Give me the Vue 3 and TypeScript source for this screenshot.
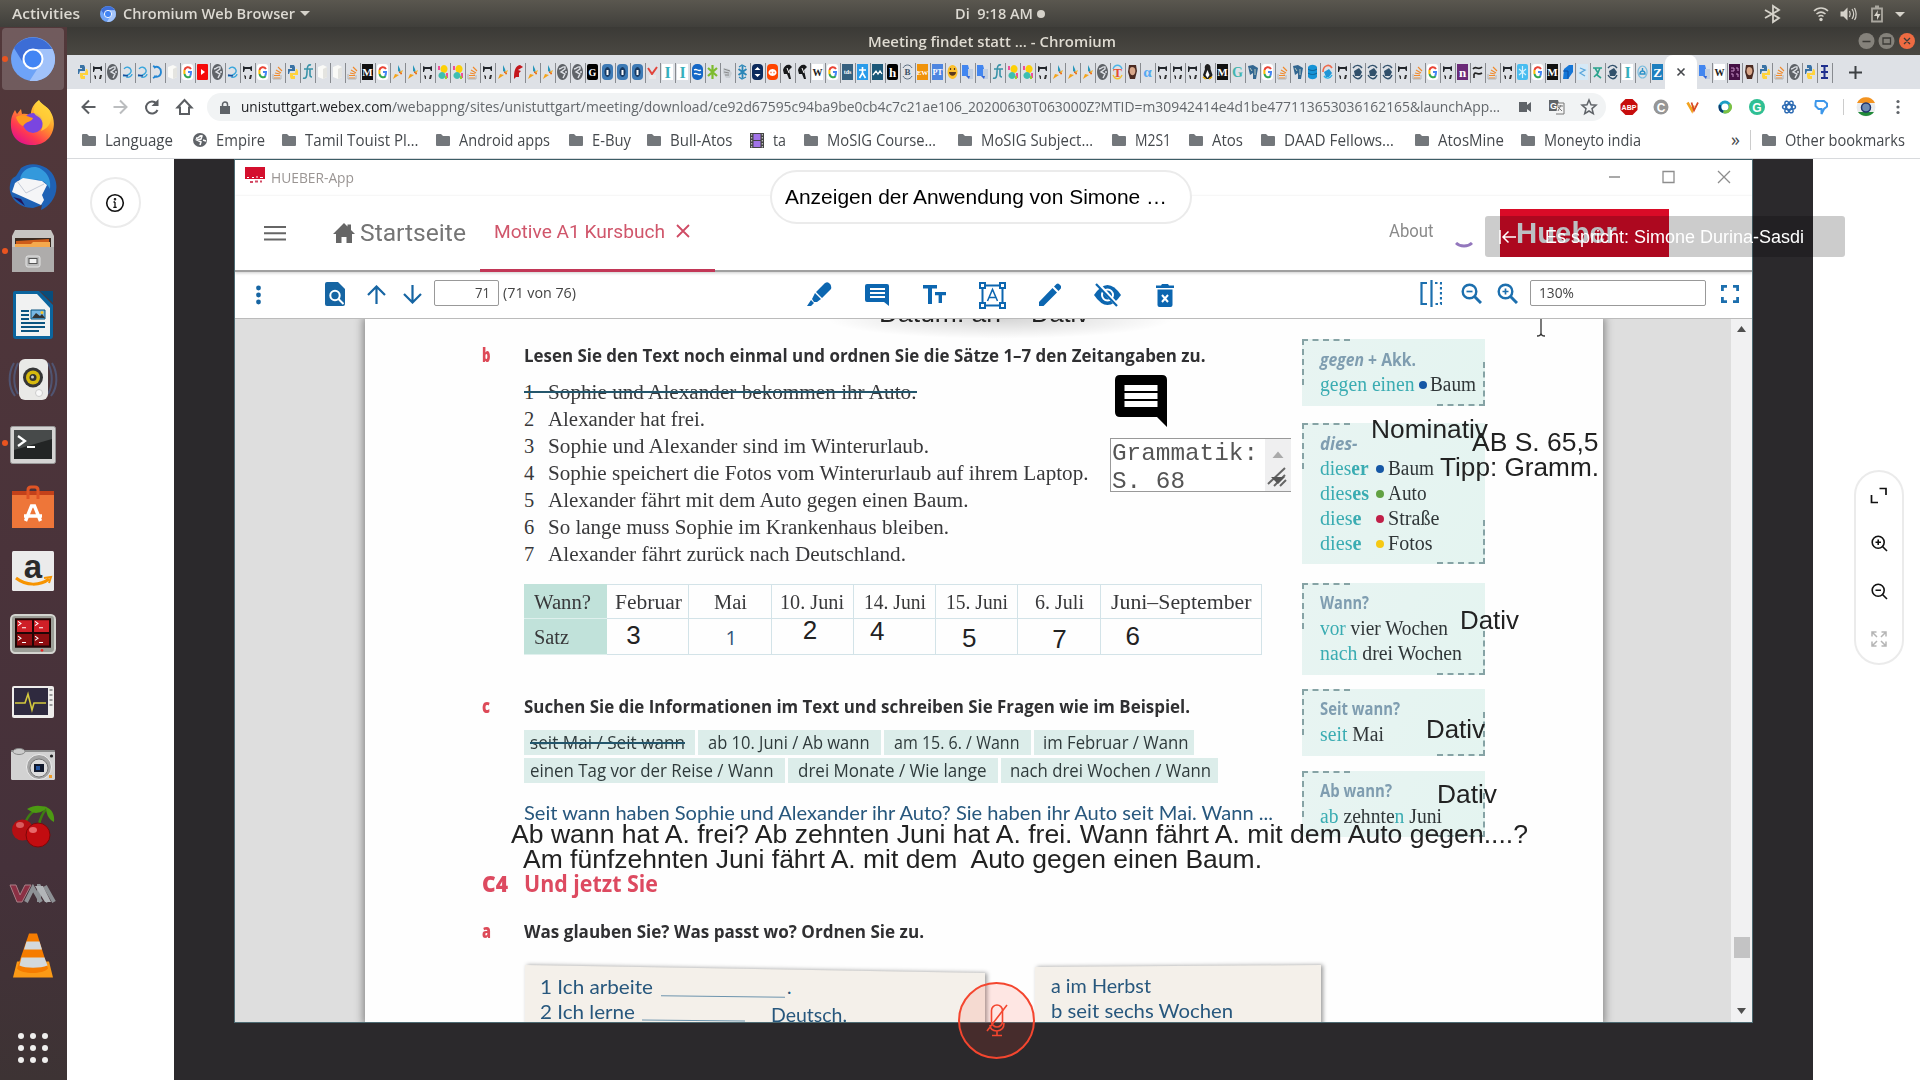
<script setup lang="ts">
type Shape = { d: string; f?: string; s?: string; w?: number }
type Fav = { bg?: string; r?: number; p?: Shape[]; t?: string; c?: string; z?: number }

// Stretches or condenses a run of text to the given advance width.
const fit = (el: HTMLElement, w: number) => {
  el.style.transform = 'none'
  el.style.marginRight = '0'
  const n = el.getBoundingClientRect().width
  if (!n) return
  el.style.transform = `scaleX(${w / n})`
  el.style.marginRight = `${w - n}px`
}
const vFit = {
  mounted: (el: HTMLElement, b: { value: number }) => fit(el, b.value),
}

const favs: Record<string, Fav> = {
  py: { p: [{ d: 'M3 1h4l1 2v4H3L2 10H1V5h4V4H3z', f: '#3a73a5' }, { d: 'M8 15H4l-1-2V9h5l1-4h1l1 2v4H6v1h2z', f: '#ffd33c' }] },
  gh: { p: [{ d: 'M1 2l2 1h5l2-1v5H9L8 5H3L2 8H1z', f: '#22262b' }, { d: 'M2 11l2 1v3H3zM8 11h2l-1 4H7z', f: '#333' }] },
  gl: { p: [{ d: 'M5.500 0a5.500 8 0 1 0 .01 0z', f: '#5f6368' }, { d: 'M2 5c3 0 3-3 6-2v2L4 8l4 2-2 4M8 8h2', s: '#dee1e6', w: 1.4 }] },
  c: { p: [{ d: 'M2 5c2-3 6-2 7 1s-3 6-8 6M4 13c3 1 6-1 6-3', s: '#36a5dc', w: 1.3 }, { d: 'M1 11l5 1', s: '#1a4f9c', w: 1.3 }] },
  c2: { p: [{ d: 'M2 4c3-3 7 0 7 4s-4 6-7 4M1 2l3 1M1 14l4-2', s: '#2186d4', w: 1.8 }] },
  bx: { p: [{ d: 'M1 3l5-2 4 2v10l-4 2-5-2z', f: '#fafaf7' }, { d: 'M6 5v10l4-2V3z', f: '#e4e4e0' }] },
  g: { bg: '#fff', r: 3, p: [{ d: 'M9 5C7 2 3 3 2.500 6', s: '#ea4335', w: 2 }, { d: 'M2.400 6v4', s: '#fbbc05', w: 2 }, { d: 'M2.500 10c1 4 5 4 6 2', s: '#34a853', w: 2 }, { d: 'M6 8h3c0 2 0 3-1 4', s: '#4285f4', w: 2 }] },
  yt: { bg: '#f60a0a', r: 1, p: [{ d: 'M4 5l4 3-4 3z', f: '#fff' }] },
  so: { p: [{ d: 'M2 14h6M2 11.500h6M3 9l5 1M4 6l5 3M6 3l4 4', s: '#f08a2b', w: 1.1 }, { d: 'M1 10v5h8v-4', s: '#a9a9a9', w: .8 }] },
  ft: { p: [{ d: 'M9 1C6 0 5 3 5 8s-1 7-4 6M2 5h9M8 5v6c0 2 1 2 2 2', s: '#3a93a8', w: 1.6 }] },
  m: { bg: '#111', t: 'M', c: '#fff', z: 11 },
  bd: { p: [{ d: 'M6 1l2 4 1 4-3-2z', f: '#2796ba' }, { d: 'M7 8l4-2-2 5z', f: '#f2b233' }, { d: 'M1 15l2-5 4 1z', f: '#f5a31a' }, { d: 'M7 8l3 2', s: '#e34c26', w: 1 }] },
  el: { p: [{ d: 'M7 1a3.500 4 0 1 0 .01 0z', f: '#fdd006' }, { d: 'M5 8a3.500 3.500 0 1 0 .01 0z', f: '#3ebeb0' }, { d: 'M1 2h2v4H1zM9 9h2v5H9z', f: '#f04e98' }, { d: 'M8 12h2v3H8z', f: '#9c3' }] },
  rd: { p: [{ d: 'M2 15c0-8 1-13 6-14l3 2-5 3 3 1-2 2v4H4z', f: '#c4161c' }] },
  gb: { bg: '#000', r: 2, t: 'G', c: '#fff', z: 10 },
  dk: { bg: '#3d7ab5', r: 4, p: [{ d: 'M5.500 3a3 5 0 1 0 .01 0z', f: '#173a63' }, { d: 'M5.500 6v5', s: '#fff', w: 2 }] },
  ck: { p: [{ d: 'M1 4l4 6 5-7', s: '#e2453c', w: 2 }, { d: 'M2 11h7v4H2z', f: '#e9e9ea' }] },
  i: { bg: '#fff', t: 'I', c: '#35b0bd', z: 16 },
  bc: { bg: '#1467c6', r: 5, p: [{ d: 'M2 6c3-2 4 2 7 0M2 10c3-2 4 2 7 0', s: '#fff', w: 1.3 }] },
  gf: { p: [{ d: 'M5.500 1v14M1 4l9 8M10 4l-9 8', s: '#7dbb2e', w: 2.2 }] },
  hd: { p: [{ d: 'M1 4l6 1 3 4-2 5H4L1 9z', f: '#c9ced3' }, { d: 'M2 5l6 2M2 8l5 1M3 11l4 0', s: '#777', w: .8 }] },
  bf: { p: [{ d: 'M5.500 2v12M1.500 5l8 6M9.500 5l-8 6', s: '#2a86b8', w: 1.8 }, { d: 'M2 3l3-2 4 2M2 13l3 2 4-2', s: '#2a86b8', w: 1.2 }] },
  nv: { bg: '#0b2a5c', r: 4, p: [{ d: 'M5.500 3l3 3H2.500zM5.500 13l3-3H2.500z', f: '#fff' }] },
  re: { bg: '#ff4500', r: 4, p: [{ d: 'M5.500 5a4 3.500 0 1 0 .01 0z', f: '#fff' }, { d: 'M3.500 8.500h1M6.500 8.500h1', s: '#ff4500', w: 1.5 }] },
  bb: { p: [{ d: 'M1 6c1-4 4-6 7-5l2 2-3 3 2 9H7L5 10H2z', f: '#17191b' }, { d: 'M5 4l2 5', s: '#fff', w: 1 }] },
  w: { bg: '#fff', t: 'W', c: '#222', z: 10 },
  td: { bg: '#35607f', t: 'tds', c: '#fff', z: 6 },
  pe: { bg: '#2a9cea', p: [{ d: 'M5.500 3v6l-3 5M5.500 9l3 5M2 6h7', s: '#fff', w: 1.6 }] },
  mt: { bg: '#1b5778', p: [{ d: 'M1 11l3-4 2 3 2-3 2 3', s: '#fff', w: 1.3 }] },
  h: { bg: '#000', r: 2, t: 'h', c: '#fff', z: 13 },
  b: { t: 'B', c: '#3d5166', z: 9, p: [{ d: 'M1 4c2-4 7-4 9 0M1 12c2 4 7 4 9 0', s: '#5b6d80', w: 1 }] },
  ew: { bg: '#f0930a', t: 'EW', c: '#fff', z: 7 },
  pt: { bg: '#4e86e0', t: 'PT', c: '#fff', z: 8 },
  em: { p: [{ d: 'M5.500 1a5 7 0 1 0 .01 0z', f: '#fbc02d' }, { d: 'M2 8h7c0 5-7 5-7 0z', f: '#5b3a1e' }, { d: 'M3.500 4v2M7.500 4v2', s: '#5b3a1e', w: 1.2 }] },
  tr: { p: [{ d: 'M0 1h6l3 11H0z', f: '#4286f0' }, { d: 'M6 5h5v10H6z', f: '#c3cfe0' }, { d: 'M4 12h4l-1 3z', f: '#3367d6' }] },
  tt: { t: 'T', c: '#e54b32', z: 13, p: [{ d: 'M1 5c2-5 7-5 9 0', s: '#4bb6e8', w: 1.4 }, { d: 'M1 11c2 5 7 5 9 0', s: '#f2c02e', w: 1.4 }] },
  fc: { p: [{ d: 'M2 1h7l1 6-2 8H3L1 8z', f: '#4b2b22' }, { d: 'M5 3c3 0 4 3 3 6s-4 3-5 0 0-6 2-6z', f: '#d8a78a' }] },
  al: { t: 'α', c: '#55a9f2', z: 15 },
  lx: { p: [{ d: 'M5.500 0a3 4 0 0 1 3 5l2 6-2 4H3l-2-4 2-6c-1-3 1-5 2.500-5z', f: '#1e1e1e' }, { d: 'M5.500 6l2 5-2 3-2-3z', f: '#fff' }, { d: 'M1 13l3 2M10 13l-3 2', s: '#f4b400', w: 1.5 }] },
  gt: { t: 'G', c: '#44b5ae', z: 14 },
  pg: { p: [{ d: 'M1 2l5-1 5 3-2 11H6V9L3 11z', f: '#336791' }, { d: 'M3 4l2 3M8 5v6', s: '#b8c9c0', w: 1 }] },
  db: { p: [{ d: 'M1 3c2-3 7-3 9 0v10c-2 3-7 3-9 0z', f: '#1693d6' }, { d: 'M1 5c3 2 6 2 9 0M1 9c3 2 6 2 9 0', s: '#0d5f93', w: 1 }] },
  rc: { p: [{ d: 'M10 4C7-1 1 2 1 8', s: '#ef6a4c', w: 1.6 }, { d: 'M2 8l5-3 3 4-3 4H4z', f: '#2196d6' }, { d: 'M2 12c2 3 6 3 8-1', s: '#25b0e8', w: 1.4 }] },
  wh: { p: [{ d: 'M2 7l5-3 3 4-2 4H3z', f: '#31506b' }, { d: 'M1 4c3-4 7-3 9 0M1 11c3 5 7 5 9 0', s: '#31506b', w: 1.4 }] },
  pn: { bg: '#6b2a78', t: 'n', c: '#fff', z: 13 },
  ti: { p: [{ d: 'M1 5c3-4 5 2 9-2M2 10c2-3 4 2 8-1M2 10v4', s: '#222', w: 1.6 }] },
  lf: { bg: '#49bdf0', r: 2, p: [{ d: 'M5.500 2v12M2 5l7 6M9 5l-7 6', s: '#d7f1fd', w: 1.2 }] },
  bs: { p: [{ d: 'M2 5l5-4h4v7l-5 7H1z', f: '#1577d8' }, { d: 'M1 7h5v8', s: '#0c4fa4', w: 1 }] },
  ld: { bg: '#d6e9f6', p: [{ d: 'M3 4l5 2-5 3 5 3', s: '#5aa7dc', w: 1.3 }] },
  gn: { p: [{ d: 'M1 4h9M3 4l3 5-4 4M8 4l-3 7 4 3', s: '#2aa38d', w: 1.6 }] },
  lb: { p: [{ d: 'M5.500 2a4.500 6 0 1 0 .01 0z', s: '#7dbdde', w: 1.2 }, { d: 'M3 10c0-4 5-4 5 0zM5.500 4v3', s: '#2d93c9', w: 1.4 }] },
  z: { bg: '#1d7fbf', t: 'Z', c: '#fff', z: 13 },
  pu: { bg: '#451045', p: [{ d: 'M2 4h3v3H2M7 4h2v3M2 10h2v3M7 10h2v3', s: '#c792c7', w: 1 }] },
  hh: { p: [{ d: 'M2 2h7M2 14h7M5.500 2v12M2 8h7', s: '#20308e', w: 2 }] },
}
const tabsBefore = ('py gh gl c c c2 bx g yt gl c gh g so py ft bx bx so m g bd bd gh el el so gh bd rd bd bd gl gl gb dk dk dk ' +
  'ck i i bc gf hd bf nv re bb bb w g td pe mt h b ew pt em tr tr ft el el gh bd bd bd gl tt fc al gh gh gh lx m gt pg g ' +
  'so pg db rc gh wh wh wh gh so g gh pn ti so gh lf g m bs ld gn wh i lb z').split(' ')
const tabsAfter = 'tr w pu fc py so gl py hh'.split(' ')

const bookmarks = [
  { k: 'f', t: 'Language', w: 68, p: 111 }, { k: 'g', t: 'Empire', w: 49, p: 89 },
  { k: 'f', t: 'Tamil Touist Pl…', w: 113.5, p: 154 }, { k: 'f', t: 'Android apps', w: 91, p: 132.5 },
  { k: 'f', t: 'E-Buy', w: 39, p: 78.500 }, { k: 'f', t: 'Bull-Atos', w: 62.5, p: 102.500 },
  { k: 'v', t: 'ta', w: 13, p: 54.500 }, { k: 'f', t: 'MoSIG Course…', w: 109, p: 154 },
  { k: 'f', t: 'MoSIG Subject…', w: 112, p: 154 }, { k: 'f', t: 'M2S1', w: 36, p: 77 },
  { k: 'f', t: 'Atos', w: 31, p: 72 }, { k: 'f', t: 'DAAD Fellows…', w: 110, p: 154 },
  { k: 'f', t: 'AtosMine', w: 66, p: 106 }, { k: 'f', t: 'Moneyto india', w: 97, p: 120 },
]

const sentences = [
  { t: 'Sophie und Alexander bekommen ihr Auto.', w: 368.5 },
  { t: 'Alexander hat frei.', w: 157 },
  { t: 'Sophie und Alexander sind im Winterurlaub.', w: 381 },
  { t: 'Sophie speichert die Fotos vom Winterurlaub auf ihrem Laptop.', w: 540.5 },
  { t: 'Alexander fährt mit dem Auto gegen einen Baum.', w: 420.5 },
  { t: 'So lange muss Sophie im Krankenhaus bleiben.', w: 401 },
  { t: 'Alexander fährt zurück nach Deutschland.', w: 358 },
]
const months = [
  { t: 'Februar', w: 67, a: '3', c: 'n3' }, { t: 'Mai', w: 33, a: '1', c: 'n1' },
  { t: '10. Juni', w: 64, a: '2', c: 'n2' }, { t: '14. Juni', w: 62, a: '4', c: 'n4' },
  { t: '15. Juni', w: 62, a: '5', c: 'n5' }, { t: '6. Juli', w: 49, a: '7', c: 'n7' },
  { t: 'Juni–September', w: 140.5, a: '6', c: 'n6' },
]
const chips = [
  [{ t: 'seit Mai / Seit wann', w: 155, b: 171, l: 6, x: true }, { t: 'ab 10. Juni / Ab wann', w: 161.5, b: 183, l: 10 }, { t: 'am 15. 6. / Wann', w: 125.5, b: 146.5, l: 9.5 }, { t: 'im Februar / Wann', w: 145.5, b: 160.5, l: 9.5 }],
  [{ t: 'einen Tag vor der Reise / Wann', w: 243.5, b: 261, l: 6 }, { t: 'drei Monate / Wie lange', w: 188.5, b: 209.5, l: 10 }, { t: 'nach drei Wochen / Wann', w: 201, b: 217, l: 9.5 }],
]
const nouns = [
  { e: 'er', w: 48.5, c: '#1557a5', n: 'Baum', nw: 46 }, { e: 'es', w: 49, c: '#62a143', n: 'Auto', nw: 38.5 },
  { e: 'e', w: 41.5, c: '#c01f48', n: 'Straße', nw: 51.5 }, { e: 'e', w: 41.5, c: '#f6c913', n: 'Fotos', nw: 44.5 },
]
// Free-text notes laid over the document page.
const notes = [
  { t: 'Nominativ', x: 1371, y: 438, w: 117 }, { t: 'AB S. 65,5', x: 1472, y: 451, w: 126.5 },
  { t: 'Tipp: Gramm.', x: 1440, y: 476, w: 159 }, { t: 'Dativ', x: 1460, y: 629, w: 59 },
  { t: 'Dativ', x: 1426, y: 737.5, w: 59 }, { t: 'Dativ', x: 1437, y: 803, w: 60 },
  { t: 'Ab wann hat A. frei? Ab zehnten Juni hat A. frei. Wann fährt A. mit dem Auto gegen....?', x: 510.500, y: 843, w: 1017 },
  { t: 'Am fünfzehnten Juni fährt A. mit dem  Auto gegen einen Baum.', x: 522.500, y: 867.500, w: 739 },
  { t: 'Datum: an', x: 879, y: 322, w: 122 }, { t: 'Dativ', x: 1031, y: 322, w: 58 },
]
const noteStyle = (n: { x: number; y: number }) => ({ left: `${n.x - 235}px`, top: `${n.y - 319 - 24}px` })
</script>

<template>
  <div class="desktop">
    <header class="panel">
      <span class="pt act" v-fit="68">Activities</span>
      <svg class="pchr" width="16" height="16" viewBox="0 0 44 44"><circle cx="22" cy="22" r="22" fill="#6ea3f7" /><path d="M3 11A22 22 0 0 1 41 12L22 13 12 24z" fill="#3f6fd8" /><path d="M22 12h19a22 22 0 0 1-22 32l10-17z" fill="#a5c5fb" /><circle cx="22" cy="22" r="10" fill="#4285f4" stroke="#fff" stroke-width="2.500" /></svg>
      <span class="pt" v-fit="172">Chromium Web Browser</span>
      <svg class="parr" width="10" height="5"><path d="M0 0h10l-5 5z" fill="#d5d2ca" /></svg>
      <span class="pt clock" v-fit="78">Di&nbsp; 9:18 AM</span><i class="pdot"></i>
      <svg class="status" width="150" height="26" viewBox="1758 0 150 26" fill="none" stroke="#d5d2ca">
        <path d="M1764 9l14 8-6 4V5l6 4-14 8" stroke-width="1.800" transform="translate(1,0)" />
        <path d="M1814 10c4-4 10-4 14 0M1816.500 13c3-2.500 6-2.500 9 0" stroke-width="1.600" /><path d="M1818.500 15.500c2-1.500 3-1.500 5 0" stroke-width="1.400" /><circle cx="1821" cy="18.500" r="1.700" fill="#d5d2ca" stroke="none" />
        <path d="M1840.500 10.500h3l4-4v13l-4-4h-3z" fill="#d5d2ca" stroke="none" /><path d="M1849.500 10c1 2 1 4 0 6M1852 8c2 3 2 7 0 10M1854.500 7c2 4 2 9 0 12" stroke-width="1.200" />
        <path d="M1872 7.500h10v13h-10zM1875 5.500h4" stroke="#aaa79f" stroke-width="1.800" /><path d="M1878 9l-4 6h3v4l3.500-6h-3z" fill="#d5d2ca" stroke="none" />
        <path d="M1895 11h10l-5 5z" fill="#d5d2ca" stroke="none" />
      </svg>
    </header>

    <div class="below">
      <nav class="dock">
        <div class="di active run"><svg width="44" height="44" viewBox="0 0 44 44"><circle cx="22" cy="22" r="22" fill="#6ea3f7" /><path d="M3 11A22 22 0 0 1 41 12L22 12 11 24z" fill="#3c6dd6" /><path d="M22 12h19.500a22 22 0 0 1-23 32l11-17z" fill="#a1c2fa" /><circle cx="22" cy="22" r="9.500" fill="#4285f4" stroke="#fff" stroke-width="2" /></svg></div>
        <div class="di"><svg width="48" height="48" viewBox="0 0 48 48"><defs><linearGradient id="ff" x1=".9" y1=".1" x2=".3" y2="1"><stop offset="0" stop-color="#fff04a" /><stop offset=".4" stop-color="#ff9a2a" /><stop offset=".75" stop-color="#ff3a50" /><stop offset="1" stop-color="#e31587" /></linearGradient></defs><path d="M30 1c2 4 8 6 11 11 9 13 2 34-17 34C8 46 1 36 2 23c0-4 1-7 4-12l2 4 4-5 1 5c5-1 8 1 9 3-1-6 2-13 8-17z" fill="url(#ff)" /><circle cx="24" cy="24" r="10" fill="#7a45e0" /><path d="M7 18c6-4 12 0 17 1-1 4-7 3-10 8-3-1-6-5-7-9z" fill="#ff9a20" /><path d="M30 2c-7 6-6 13-2 15 6 3 7 9 4 15 9-3 12-12 9-20-3-5-9-6-11-10z" fill="#ffcf38" opacity=".8" /></svg></div>
        <div class="di"><svg width="48" height="48" viewBox="0 0 48 48"><path d="M12 5C22-3 42 2 46 16c5 14-4 27-14 31l1-5-9 3C8 45-1 33 1 22c1-7 3-7 6-9z" fill="#1f62b5" /><path d="M11 17C12 6 24 1 32 6c8 5 10 12 9 20-4-8-10-10-18-9z" fill="#3399dc" /><path d="M6 20l8-5 19 3 5 4-5 10 2 5-3 5-20-9-9-4z" fill="#f5f5f7" /><path d="M8 18l9 12 18-9" stroke="#c5cbd7" fill="none" /><path d="M4 34l12 9-4-7z" fill="#241556" /></svg></div>
        <div class="di run"><svg width="44" height="44" viewBox="0 0 44 44"><path d="M4 1h36l3 6v36H1V7z" fill="#c7c5c2" /><path d="M4 9h36v11H4z" fill="#3a2b22" /><path d="M5 12l33-2v10H5z" fill="#cd5c1a" /><path d="M4 15h16l2-2h17v6H4z" fill="#f4a94d" /><path d="M1 18h42v25H1z" fill="#aeacab" /><rect x="15" y="27" width="14" height="11" rx="2" fill="#bbb" stroke="#e4e4e4" /><rect x="18" y="29.500" width="8" height="5" fill="#f2f2f2" stroke="#555" /></svg></div>
        <div class="di"><svg width="42" height="50" viewBox="0 0 42 50"><path d="M1 3q0-2 2-2h24l14 14v31q0 3-3 3H4q-3 0-3-3z" fill="#0b659e" /><path d="M28 1h13v12z" fill="#094d7b" /><path d="M4 4h21l13 14v28H4z" fill="#f1f2f2" /><path d="M9 21h8M9 25h8M9 29h8M9 33h24M9 37h24M9 41h18" stroke="#0b5480" stroke-width="2" /><path d="M19 20h14v9H19z" fill="#77b7e4" stroke="#0b5480" /><path d="M20 28l4-5 4 3 2-2 3 4z" fill="#333" /><circle cx="30" cy="22.500" r="1.500" fill="#f4c430" /></svg></div>
        <div class="di"><svg width="50" height="48" viewBox="0 0 50 48"><path d="M6 8c-6 10-6 24 1 33M44 8c6 10 6 24-1 33M10 8c-5 10-5 22 0 31M40 8c5 10 5 22 0 31" stroke="#5470a0" opacity=".55" stroke-width="2" fill="none" /><rect x="11" y="4" width="29" height="41" rx="6" fill="#e9e9e7" /><circle cx="25" cy="22.500" r="10" fill="#353535" /><circle cx="25" cy="22.500" r="7" fill="#d6b90d" /><circle cx="25" cy="22.500" r="3.500" fill="#333" /><circle cx="24.500" cy="22" r="1.500" fill="#ccc" /><circle cx="31" cy="38" r="3.500" fill="#f8f8f8" stroke="#ccc" /></svg></div>
        <div class="di run lo"><svg width="46" height="38" viewBox="0 0 46 38"><rect x=".5" y=".5" width="45" height="37" rx="2" fill="#d5d4d3" stroke="#999" /><path d="M4 4h38v29H4z" fill="#232525" /><path d="M4 4h38v9L4 24z" fill="#474a4a" /><path d="M8 10l7 5-7 5M17 21h8" stroke="#fff" stroke-width="2.200" fill="none" /></svg></div>
        <div class="di"><svg width="42" height="44" viewBox="0 0 42 44"><path d="M0 6h42v7H0z" fill="#c3411a" /><path d="M0 10h42v33H0z" fill="#ee7639" /><path d="M16 14V5q0-3 3-3h4q3 0 3 3v9" stroke="#df5425" stroke-width="3" fill="none" /><path d="M13.500 36l6-15h3l6 15M12 31h18" stroke="#fff" stroke-width="3.400" fill="none" /></svg></div>
        <div class="di"><svg width="42" height="42" viewBox="0 0 42 42"><rect y="1" width="42" height="40" rx="1.500" fill="#ebebeb" /><text x="21" y="28" text-anchor="middle" class="amz">a</text><path d="M4 28c10 8 24 8 33 1" stroke="#f79400" stroke-width="3" fill="none" /><path d="M32 28l7-1-2 6" stroke="#f79400" stroke-width="2" fill="none" /></svg></div>
        <div class="di up1"><svg width="46" height="40" viewBox="0 0 46 38" preserveAspectRatio="none"><rect x="1" y="1" width="44" height="36" rx="4" fill="#9b9d96" stroke="#d3d4cf" stroke-width="2" /><path d="M5 4h36v28H5z" fill="#200606" /><path d="M7 6h15v11H7zM24 6h15v11H24z" fill="#cf1f27" /><path d="M7 19h15v11H7zM24 19h15v11H24z" fill="#8e0d10" /><path d="M8 7l3 2-3 2M12 13h4M25 7l3 2-3 2M29 13h4M8 21l3 2-3 2M12 27h4M25 21l3 2-3 2M29 27h4" stroke="#fff" fill="none" /><circle cx="32" cy="34.500" r="1.300" fill="#e22" /></svg></div>
        <div class="di down3"><svg width="42" height="33" viewBox="0 0 42 33"><rect width="42" height="32" rx="2" fill="#efedeb" /><path d="M2 2h34v27H2z" fill="#2f2a3f" /><path d="M3 17h10l3-9 4 16 2-7h12" stroke="#d4c93e" stroke-width="1.600" fill="none" /><path d="M37.500 4h3M37.500 9h3M37.500 14h3M37.500 19h3" stroke="#999" stroke-width="2" /></svg></div>
        <div class="di down1"><svg width="44" height="33" viewBox="0 0 44 33"><rect y="2" width="44" height="30" rx="1.500" fill="#d2d2d2" /><path d="M0 3h44" stroke="#777" stroke-width="1.500" /><ellipse cx="8" cy="3.500" rx="6" ry="3" fill="#ccc" stroke="#888" /><circle cx="28" cy="19" r="12.500" fill="#a4a4a4" stroke="#eee" /><circle cx="28" cy="20" r="9" fill="#ddd" stroke="#777" /><rect x="23" y="16" width="10" height="8" fill="#10182b" /><rect x="25" y="18" width="4" height="4" fill="#23549e" /><circle cx="40.500" cy="8" r="1.600" fill="#222" /><path d="M38 27h3v3h-3z" fill="#f09a24" /></svg></div>
        <div class="di up1"><svg width="44" height="44" viewBox="0 0 44 44"><path d="M15 17c4-9 10-12 19-13M28 21c1-7 4-12 7-16" stroke="#3e7d12" stroke-width="2.500" fill="none" /><path d="M16 5c8-5 14-3 20-2-4 6-12 7-15 5zM35 3c6 2 9 8 8 15-6-3-8-9-8-15z" fill="#4c9a12" /><circle cx="11.500" cy="26" r="10.500" fill="#b50f13" /><circle cx="27" cy="31" r="12" fill="#c20c10" stroke="#7d0709" /><ellipse cx="22" cy="26" rx="4" ry="3" fill="#e8696a" /><ellipse cx="9" cy="21" rx="4" ry="3" fill="#d95c5d" /></svg></div>
        <div class="di down3"><svg width="48" height="20" viewBox="0 0 48 20"><path d="M1 1h6l4 10 5-10h6l-9 17H8z" fill="#8b3044" stroke="#aa8088" /><path d="M17 18L24 4l8 14M30 18V2l9 16M36 2l9 16" stroke="#8d9195" stroke-width="4" fill="none" /><path d="M26 2h8l8 16h-6z" fill="#b2b5b8" /></svg></div>
        <div class="di"><svg width="42" height="47" viewBox="0 0 42 46"><path d="M5 29h32l4 16H1z" fill="#fb9a16" /><path d="M17 1h8l11 35c-5 6-26 6-31 0z" fill="#f57c00" /><path d="M14.500 9h13l2.500 8H12zM9.500 25h23l3 8c-7 3-22 3-28 0z" fill="#d3d9dc" /></svg></div>
        <div class="apps"><i v-for="n in 9" :key="n"></i></div>
      </nav>

      <main class="win">
        <div class="title"><span v-fit="248">Meeting findet statt ... - Chromium</span>
          <div class="wbtns"><svg width="60" height="18" viewBox="0 0 60 18"><circle cx="9.500" cy="9" r="8" fill="#85827b" /><circle cx="29.500" cy="9" r="8" fill="#85827b" /><circle cx="50" cy="9" r="8" fill="#ee6b42" /><path d="M5.500 9.500h8M26 6h7.500v6H26zM47 6l6 6M53 6l-6 6" stroke="#3c3b37" stroke-width="1.300" fill="none" /></svg></div>
        </div>

        <div class="tabs">
          <div class="tab" v-for="(k, i) in tabsBefore" :key="i">
            <svg width="11" height="16" viewBox="0 0 11 16"><rect v-if="favs[k].bg" width="11" height="16" :rx="favs[k].r || 0" :fill="favs[k].bg" /><path v-for="(s, j) in favs[k].p || []" :key="j" :d="s.d" :fill="s.f || 'none'" :stroke="s.s" :stroke-width="s.w" /><text v-if="favs[k].t" x="5.500" :y="8 + (favs[k].z || 10) * .36" :font-size="favs[k].z" :fill="favs[k].c" text-anchor="middle">{{ favs[k].t }}</text></svg>
          </div>
          <div class="tab-on"><svg width="10" height="10"><path d="M1.500 1.500l7 7M8.500 1.500l-7 7" stroke="#45484c" stroke-width="1.600" /></svg></div>
          <div class="tab" v-for="(k, i) in tabsAfter" :key="'a' + i">
            <svg width="11" height="16" viewBox="0 0 11 16"><rect v-if="favs[k].bg" width="11" height="16" :rx="favs[k].r || 0" :fill="favs[k].bg" /><path v-for="(s, j) in favs[k].p || []" :key="j" :d="s.d" :fill="s.f || 'none'" :stroke="s.s" :stroke-width="s.w" /><text v-if="favs[k].t" x="5.500" :y="8 + (favs[k].z || 10) * .36" :font-size="favs[k].z" :fill="favs[k].c" text-anchor="middle">{{ favs[k].t }}</text></svg>
          </div>
          <svg class="plus" width="13" height="13"><path d="M6.500 0v13M0 6.500h13" stroke="#3c4043" stroke-width="2" /></svg>
        </div>

        <div class="bar">
          <svg class="navi" width="118" height="18" viewBox="0 0 118 18" fill="none" stroke="#5b5e62" stroke-width="2"><path d="M14.500 9H2M8 2.500L1.500 9 8 15.500" /><path d="M32.500 9H45M39 2.500L45.500 9 39 15.500" stroke="#bbbdbf" /><path d="M75.500 5.500A6 6 0 1 0 76.500 12" /><path d="M77.500 1v7h-7z" fill="#5b5e62" stroke="none" /><path d="M96.500 9.500l7-7.500 7 7.500h-2.500V16h-9V9.500z" /></svg>
          <div class="url">
            <svg class="lock" width="10" height="13"><path d="M0 5h10v8H0z" fill="#5f6368" /><path d="M2.500 6V3.500a2.500 2.500 0 0 1 5 0V6" fill="none" stroke="#5f6368" stroke-width="1.500" /></svg>
            <span class="host" v-fit="151">unistuttgart.webex.com</span><span v-fit="1108">/webappng/sites/unistuttgart/meeting/download/ce92d67595c94ba9be0cb4c7c21ae106_20200630T063000Z?MTID=m30942414e4d1be477113653036162165&amp;launchApp…</span>
            <svg class="uic" width="80" height="18" viewBox="0 0 80 18"><path d="M1 4h8v3l4-3v10l-4-3v3H1z" fill="#5f6368" /><path d="M31 2h9l3 11H31z" fill="#606468" /><path d="M40 5h6v11h-8" fill="#f4f4f4" stroke="#777" /><text x="32" y="11" font-size="9" fill="#fff">G</text><path d="M40 8h5M43 7l-3 6M40 9l4 4" stroke="#777" fill="none" /><path d="M71 2l2 4.800 5 .4-4 3.400 1.300 5L71 13l-4.300 2.600 1.300-5-4-3.400 5-.4z" fill="none" stroke="#5f6368" stroke-width="1.500" /></svg>
          </div>
          <svg class="ext" width="300" height="26" viewBox="1615 94 300 26">
            <path d="M1625.500 99h7l5 5v6l-5 5h-7l-5-5v-6z" fill="#c70d0d" /><text x="1629" y="110" class="abp" text-anchor="middle">ABP</text>
            <circle cx="1661" cy="107" r="7.500" fill="#969696" /><text x="1661" y="111.500" class="exl" text-anchor="middle">C</text>
            <path d="M1687.500 102.500l4.500 8 1.500-5" stroke="#f2a31f" stroke-width="2.600" fill="none" /><path d="M1691.500 102.500l2.500 8 4-8" stroke="#d84a26" stroke-width="1.700" fill="none" />
            <circle cx="1725" cy="107" r="5" fill="none" stroke="#1d9ec4" stroke-width="3" /><path d="M1729.500 104a5 5 0 0 1-6 7.500" stroke="#7cc142" stroke-width="3" fill="none" /><path d="M1720 105a6 6 0 0 0 3 7" stroke="#0d3c6c" stroke-width="2.400" fill="none" />
            <circle cx="1757" cy="107" r="8" fill="#2fbf93" /><text x="1757" y="111.500" class="exl" text-anchor="middle">G</text>
            <g fill="none" stroke="#2d6bb3" stroke-width="1.500"><ellipse cx="1789" cy="107" rx="6.500" ry="2.500" /><ellipse cx="1789" cy="107" rx="6.500" ry="2.500" transform="rotate(60 1789 107)" /><ellipse cx="1789" cy="107" rx="6.500" ry="2.500" transform="rotate(120 1789 107)" /></g>
            <path d="M1816 101h8l3 2.500v3l-3 2.500-2.500 5v-5h-3l-3-3v-3z" fill="none" stroke="#3d97ea" stroke-width="2" />
            <path d="M1843.500 99v16" stroke="#ccc" />
            <circle cx="1866" cy="107" r="9.500" fill="#e9ecee" /><path d="M1857 103a10 10 0 0 1 18 0z" fill="#f39320" /><path d="M1858 112h16a10 10 0 0 1-16 0z" fill="#228b3a" /><circle cx="1866" cy="107.500" r="4.500" fill="#6d8bb3" stroke="#20356d" stroke-width="1.500" />
            <g fill="#5f6368"><circle cx="1898" cy="101.500" r="1.600" /><circle cx="1898" cy="107" r="1.600" /><circle cx="1898" cy="112.500" r="1.600" /></g>
          </svg>
        </div>

        <div class="marks">
          <div class="mark" v-for="b in bookmarks" :key="b.t" :style="{ width: b.p + 'px' }">
            <svg v-if="b.k === 'f'" width="14" height="12"><path d="M0 1q0-1 1-1h4l2 2h6q1 0 1 1v8q0 1-1 1H1q-1 0-1-1z" fill="#73777b" /></svg>
            <svg v-else-if="b.k === 'g'" width="14" height="14"><circle cx="7" cy="7" r="7" fill="#5f6368" /><path d="M3 5c3 1 3-3 6-2l-1 3-4 1 4 2-1 3M10 7l3 1" stroke="#fff" stroke-width="1.500" fill="none" /></svg>
            <svg v-else width="14" height="15"><path d="M0 0h14v15H0z" fill="#444" /><path d="M3.500 1h7v6h-7zM3.500 8h7v6h-7z" fill="#a173e8" /><path d="M1.700 1v14M12.300 1v14" stroke="#ddd" stroke-dasharray="1.500 1.500" /></svg>
            <span v-fit="b.w">{{ b.t }}</span>
          </div>
          <span class="more">»</span>
          <div class="mark other"><svg width="14" height="12"><path d="M0 1q0-1 1-1h4l2 2h6q1 0 1 1v8q0 1-1 1H1q-1 0-1-1z" fill="#73777b" /></svg><span v-fit="120">Other bookmarks</span></div>
        </div>

        <div class="content">
          <div class="gutter"><div class="info"><svg width="20" height="20" fill="none" stroke="#111" stroke-width="1.600"><circle cx="10" cy="10" r="8.300" /><path d="M10 9v5.500M8.500 9H10M8.300 14.300h3.400" stroke-width="1.300" /><circle cx="10" cy="6.200" r=".5" /></svg></div></div>
          <div class="stage">
            <div class="shared">
              <div class="apptitle">
                <svg width="20" height="17"><path d="M0 0h20v12H0z" fill="#d40f2d" /><path d="M2 10.500h2M7 10.500h2M11 10h2M15 10.500h3" stroke="#fff" stroke-width="1.200" /><path d="M5 15h3M10 14.500h3M15 14.500h2" stroke="#d34a65" stroke-width="2" /></svg>
                <span v-fit="83">HUEBER-App</span>
                <svg class="wc" width="124" height="14" fill="none" stroke="#8d8d8d" stroke-width="1.300"><path d="M1 7h11M55 1.500h11v11H55zM110 1l12 12M122 1l-12 12" /></svg>
              </div>
              <div class="appnav">
                <svg class="burger" width="22" height="16"><path d="M0 2h22M0 8.300h22M0 14.600h22" stroke="#666" stroke-width="2" /></svg>
                <svg class="house" width="22" height="20"><path d="M11 0l3.500 3.500V1.500H18V7l4 4h-3v9h-5.500v-6h-5v6H3v-9H0z" fill="#666" /></svg>
                <span class="start" v-fit="106">Startseite</span>
                <div class="ktab"><span v-fit="171">Motive A1 Kursbuch</span><svg width="14" height="14"><path d="M1 1l12 12M13 1L1 13" stroke="#cf4b64" stroke-width="1.800" /></svg></div>
                <span class="about" v-fit="44.500">About</span>
                <svg class="arc" width="18" height="6"><path d="M1 1c4 4 12 4 16 0" stroke="#9377bd" stroke-width="3" fill="none" /></svg>
                <div class="brand"><span v-fit="101">Hueber</span></div>
              </div>
              <div class="tools">
                <svg class="t1" width="5" height="20" fill="#1665a3"><circle cx="2.500" cy="3" r="2.400" /><circle cx="2.500" cy="10" r="2.400" /><circle cx="2.500" cy="17" r="2.400" /></svg>
                <svg class="t2" width="20" height="24"><path d="M2 0h11l7 7v15q0 2-2 2H2q-2 0-2-2V2q0-2 2-2z" fill="#1665a3" /><circle cx="10" cy="13.500" r="4.700" stroke="#fff" stroke-width="2" fill="none" /><path d="M13.500 17l5 5" stroke="#fff" stroke-width="2" /></svg>
                <svg class="t3" width="19" height="19"><path d="M9.500 19V2M1 10l8.500-8.500L18 10" stroke="#1665a3" stroke-width="2.200" fill="none" /></svg>
                <svg class="t4" width="19" height="19"><path d="M9.500 0v17M1 9l8.500 8.500L18 9" stroke="#1665a3" stroke-width="2.200" fill="none" /></svg>
                <div class="field num"><span v-fit="15">71</span></div>
                <span class="of" v-fit="73">(71 von 76)</span>
                <svg class="t5" width="25" height="25" fill="#0c66b0"><path d="M16 3q3-4 6-2t2 6l-9 9-6-6zM8 11l6 6-4 3-3 0-2-3zM4 18l3 3-3 3H0z" /></svg>
                <svg class="t6" width="24" height="24"><path d="M2 1h20q2 0 2 2v20l-5-4H2q-2 0-2-2V3q0-2 2-2z" fill="#0c66b0" /><path d="M5 6h15M5 10h15M5 14h15" stroke="#fff" stroke-width="2" /></svg>
                <svg class="t7" width="23" height="19" fill="#0c66b0"><path d="M0 0h14v3.500H9V19H5V3.500H0zM12 7h11v3.300h-4V18h-3.400v-7.700H12z" /></svg>
                <svg class="t8" width="27" height="27" fill="none" stroke="#0c66b0" stroke-width="2"><path d="M6 3.500h15M6 23.500h15M3.500 6v15M23.500 6v15M1 1h5v5H1zM21 1h5v5h-5zM1 21h5v5H1zM21 21h5v5h-5z" /><path d="M8.500 19l5-11.500 5 11.500M10 15.500h7" stroke-width="1.500" /></svg>
                <svg class="t9" width="22" height="23" fill="#0c66b0"><path d="M0 19L13.500 5l4.500 4.500L4.500 23H0zM15 3.500L17.500 1q1.500-1 2.500 0l2 2q.8 1.200 0 2.200L19.500 8z" /></svg>
                <svg class="t10" width="27" height="24" fill="none"><path d="M0 12q13.500-20 27 0q-13.500 20-27 0z" fill="#0c66b0" /><circle cx="13.500" cy="12" r="5.500" stroke="#fff" stroke-width="2" /><path d="M3 0l21 23" stroke="#fff" stroke-width="4" /><path d="M2 1l21 22" stroke="#0c66b0" stroke-width="2.200" /></svg>
                <svg class="t11" width="18" height="23"><path d="M0 1.500h5L6 0h6l1 1.500h5V4H0zM1.500 5.500h15V21q0 2-2 2h-11q-2 0-2-2z" fill="#0c66b0" /><path d="M6 11l6 7M12 11l-6 7" stroke="#fff" stroke-width="2" /></svg>
                <svg class="t12" width="22" height="27" fill="none" stroke="#1c6fae" stroke-width="2.200"><path d="M7 3H1.500v21H7M11.500 0v27" /><path d="M15 3h6v21h-6" stroke-dasharray="2.500 2.500" /></svg>
                <svg class="t13" width="21" height="21" fill="none" stroke="#1c6fae" stroke-width="2.400"><circle cx="8.500" cy="8.500" r="6.800" /><path d="M13.500 13.500L20 20" stroke-width="3" /><path d="M5.500 8.500h6" stroke-width="1.700" /></svg>
                <svg class="t14" width="21" height="21" fill="none" stroke="#1c6fae" stroke-width="2.400"><circle cx="8.500" cy="8.500" r="6.800" /><path d="M13.500 13.500L20 20" stroke-width="3" /><path d="M5.500 8.500h6M8.500 5.500v6" stroke-width="1.700" /></svg>
                <div class="field zoom"><span v-fit="35">130%</span></div>
                <svg class="t15" width="18" height="18" fill="none" stroke="#1c6fae" stroke-width="2.800"><path d="M1.400 6V1.400H6M12 1.400h4.600V6M16.600 12v4.600H12M6 16.600H1.400V12" /></svg>
              </div>

              <div class="viewer">
                <div class="page">
                  <section class="main">
                    <div class="row h3"><b class="mk" v-fit="8.500">b</b><span v-fit="681.500">Lesen Sie den Text noch einmal und ordnen Sie die Sätze 1–7 den Zeitangaben zu.</span></div>
                    <ol class="lines"><li v-for="(s, i) in sentences" :key="i" :class="{ done: i === 0 }"><span class="no">{{ i + 1 }}</span><span v-fit="s.w">{{ s.t }}</span></li></ol>
                    <table>
                      <tbody>
                        <tr class="r1"><th><span v-fit="57">Wann?</span></th><td v-for="m in months" :key="m.t" :class="m.c"><span v-fit="m.w">{{ m.t }}</span></td></tr>
                        <tr class="r2"><th><span v-fit="35">Satz</span></th><td v-for="m in months" :key="m.t"><em :class="m.c">{{ m.a }}</em></td></tr>
                      </tbody>
                    </table>
                    <div class="row h3 rc"><b class="mk" v-fit="8">c</b><span v-fit="666">Suchen Sie die Informationen im Text und schreiben Sie Fragen wie im Beispiel.</span></div>
                    <div class="chips"><div class="chiprow" v-for="(r, i) in chips" :key="i"><div class="chip" v-for="c in r" :key="c.t" :class="{ x: c.x }" :style="{ width: c.b + 'px', paddingLeft: c.l + 'px' }"><span v-fit="c.w">{{ c.t }}</span></div></div></div>
                    <div class="row hand"><span v-fit="749">Seit wann haben Sophie und Alexander ihr Auto? Sie haben ihr Auto seit Mai. Wann ...</span></div>
                    <div class="row c4"><b class="mk" v-fit="26">C4</b><span v-fit="134">Und jetzt Sie</span></div>
                    <div class="row h3 ra"><b class="mk" v-fit="9">a</b><span v-fit="400">Was glauben Sie? Was passt wo? Ordnen Sie zu.</span></div>
                    <div class="cards">
                      <div class="lift"><div class="card left">
                        <p><span v-fit="113">1 Ich arbeite</span><i class="ul"></i><span>.</span></p>
                        <p><span v-fit="95">2 Ich lerne</span><i class="ul two"></i><span class="low" v-fit="76">Deutsch.</span></p>
                      </div></div>
                      <div class="lift"><div class="card right"><p><span v-fit="100">a im Herbst</span></p><p><span v-fit="182">b seit sechs Wochen</span></p></div></div>
                    </div>
                  </section>
                  <aside class="side">
                    <div class="box b1"><h4><span v-fit="96"><i>gegen</i> + Akk.</span></h4><p><span class="tl" v-fit="94.500">gegen einen</span><i class="dot blue"></i><span v-fit="46">Baum</span></p></div>
                    <div class="box b2"><h4><span v-fit="37.500"><i>dies-</i></span></h4><p v-for="(n, i) in nouns" :key="i"><span class="stem"><span class="tl" v-fit="n.w">dies<b>{{ n.e }}</b></span></span><i class="dot nd" :style="{ background: n.c }"></i><span v-fit="n.nw">{{ n.n }}</span></p></div>
                    <div class="box b3"><h4><span v-fit="49">Wann?</span></h4><p><span v-fit="128"><span class="tl">vor</span> vier Wochen</span></p><p><span v-fit="142"><span class="tl">nach</span> drei Wochen</span></p></div>
                    <div class="box b4"><h4><span v-fit="80">Seit wann?</span></h4><p><span v-fit="64"><span class="tl">seit</span> Mai</span></p></div>
                    <div class="box b5"><h4><span v-fit="72">Ab wann?</span></h4><p><span v-fit="122"><span class="tl">ab</span> zehnte<span class="tl">n</span> Juni</span></p></div>
                  </aside>
                </div>
                <div class="scroll"><svg width="10" height="6"><path d="M0 6h9L4.500 0z" fill="#505050" /></svg><i></i><svg width="10" height="6"><path d="M0 0h9L4.500 6z" fill="#505050" /></svg></div>
                <div class="shade"></div>
                <svg class="cmt" width="52" height="52"><path d="M5 0h42q5 0 5 5v47l-10-10H5q-5 0-5-5V5q0-5 5-5z" fill="#000" /><path d="M9.500 10h33v6h-33zM9.500 18h33v6h-33zM9.500 26h33v6h-33z" fill="#fff" /></svg>
                <div class="memo"><div><span v-fit="146">Grammatik:</span><span v-fit="73">S. 68</span></div><svg width="26" height="52"><path d="M0 0h26v52H0z" fill="#efeff0" /><path d="M7.500 19h11L13 12.500z" fill="#aaa" /><path d="M3 45l17-16M9 47l11-11M15 47l6-6" stroke="#666" stroke-width="2" /><path d="M6 38h14l-7 7z" fill="#555" /></svg></div>
                <span class="note" v-for="(n, i) in notes" :key="i" v-fit="n.w" :style="noteStyle(n)">{{ n.t }}</span>
                <svg class="ibeam" width="10" height="22"><path d="M1 1q4 0 4 3v14q0 3-4 3M9 1q-4 0-4 3v14q0 3 4 3" stroke="#333" stroke-width="1.300" fill="none" /></svg>
              </div>
            </div>
            <div class="pill"><span v-fit="382">Anzeigen der Anwendung von Simone …</span></div>
            <div class="speaks"><svg width="17" height="14" fill="none" stroke="#fff" stroke-width="1.500"><path d="M1 0v14M17 7H4M9.500 1.500L4 7l5.500 5.500" /></svg><span v-fit="259">Es spricht: Simone Durina-Sasdi</span></div>
            <div class="mic"><svg width="30" height="36" fill="none" stroke="#f4462f" stroke-width="1.600"><rect x="9.500" y="2" width="11" height="22" rx="5.500" /><path d="M15 28v4M10 32.500h10M5 28L25 2M8 22q0 5.500 7 6 7-.5 7-8" /></svg></div>
          </div>
          <div class="gutter">
            <div class="ctrl">
              <svg width="18" height="18" fill="none" stroke="#111" stroke-width="1.700"><path d="M9.500 2.500H16V9M1.500 9v7.500H8" /></svg>
              <svg width="18" height="18" fill="none" stroke="#111" stroke-width="1.600"><circle cx="8.200" cy="8.200" r="6" /><path d="M12.500 12.500L17 17M5.500 8.200H11M8.200 5.500V11" /></svg>
              <svg width="18" height="18" fill="none" stroke="#111" stroke-width="1.600"><circle cx="8.200" cy="8.200" r="6" /><path d="M12.500 12.500L17 17M5.500 8.200H11" /></svg>
              <svg width="18" height="18" fill="none" stroke="#b5b5b5" stroke-width="1.500"><path d="M2 6.500V2h4.500M2 2l5 5M11.500 2H16v4.500M16 2l-5 5M2 11.500V16h4.500M2 16l5-5M11.500 16H16v-4.500M16 16l-5-5" /></svg>
            </div>
          </div>
        </div>
      </main>
    </div>
  </div>
</template>

<style>
body { margin: 0; overflow: hidden; }
</style>

<style scoped>
.desktop { width: 1920px; height: 1080px; display: flex; flex-direction: column; font-family: "Open Sans", "Noto Sans", sans-serif; overflow: hidden; }
svg { flex: none; display: block; }
span { display: inline-block; white-space: pre; transform-origin: 0 50%; flex: none; }
.box span span { display: inline; }
.panel { height: 27px; flex: none; display: flex; align-items: center; background: linear-gradient(#5a574f, #403f3b); }
.pt { font-size: 15px; font-weight: 600; color: #dcd9d2; line-height: 24px; padding-bottom: 2px; }
.act { margin-left: 12px; }
.pchr { margin-left: 20px; margin-right: 7px; }
.parr { margin-left: 5px; }
.clock { margin-left: 645px; }
.pdot { width: 8px; height: 8px; border-radius: 4px; background: #d5d2ca; margin-left: 4px; flex: none; }
.status { margin-left: auto; margin-right: 12px; }
.below { flex: 1; display: flex; min-height: 0; }
.dock { width: 67px; flex: none; background: linear-gradient(#52383a, #4a333a 50%, #45313a 80%, #3d3334); }
.di { height: 64px; display: flex; align-items: center; justify-content: center; position: relative; padding-right: 1px; box-sizing: border-box; }
.di.up1 svg { margin-top: -3px; }
.di.down1 svg { margin-top: 2px; }
.di.down3 svg { margin-top: 6px; }
.di.lo svg { margin-top: 4px; }
.di.active::before { content: ""; position: absolute; inset: 1px 3px 1px 2px; border-radius: 4px; background: rgba(255, 255, 255, .18); }
.di.active svg { position: relative; }
.di.run::after { content: ""; position: absolute; left: 2px; top: 29px; width: 6px; height: 6px; border-radius: 3px; background: #e95420; }
.amz { font: bold 33px "Liberation Sans", sans-serif; fill: #2b2b2b; }
.apps { display: grid; grid-template-columns: repeat(3, 6px); gap: 6px; margin: 46px 0 0 18px; }
.apps i { width: 6px; height: 6px; border-radius: 3px; background: #f0efee; }
.win { width: 1853px; display: flex; flex-direction: column; background: #fff; }
.title { height: 28px; flex: none; background: linear-gradient(#3b3a36, #4a4842); display: flex; align-items: center; padding-left: 801px; color: #dfdbd2; font-size: 15px; font-weight: 600; }
.title > span { padding-bottom: 1px; }
.wbtns { margin-left: auto; margin-right: 3px; }
.tabs { height: 34px; flex: none; background: #dee1e6; display: flex; padding-left: 8px; }
.tab { width: 15px; height: 34px; flex: none; padding: 9px 0 0 2px; box-sizing: border-box; position: relative; font-family: "Liberation Serif", serif; font-weight: bold; }
.tab::after { content: ""; position: absolute; right: -1px; top: 8px; height: 20px; width: 1px; background: #888b90; }
.tab-on { width: 32px; height: 34px; background: #fff; border-radius: 8px 8px 0 0; display: flex; align-items: center; justify-content: center; position: relative; flex: none; }
.plus { margin: 11px 0 0 17px; }
.bar { height: 35px; flex: none; display: flex; align-items: center; }
.navi { margin-left: 14px; flex: none; }
.url { margin-left: 8px; width: 1399px; height: 28px; border-radius: 14px; background: #f1f3f4; display: flex; align-items: center; font-size: 15px; color: #63676b; margin-top: 1px; }
.url span { padding-bottom: 2px; }
.lock { margin: 0 11px 0 13px; }
.host { color: #202124; }
.uic { margin-left: 18px; }
.uic text, .exl { font-family: "Liberation Sans", sans-serif; font-weight: bold; }
.exl { font-size: 12px; fill: #fff; }
.abp { font: bold 7px "Liberation Sans", sans-serif; fill: #fff; }
.ext { margin-left: 9px; }
.marks { height: 34px; flex: none; display: flex; align-items: center; border-bottom: 1px solid #d8dadd; padding: 0 0 2px 15px; height: 32px; color: #45494d; font-size: 15.500px; }
.mark { display: flex; align-items: center; gap: 9px; flex: none; height: 31px; }
.more { margin-left: 90px; font-size: 18px; line-height: 24px; padding-bottom: 2px; }
.other { margin-left: 10px; border-left: 1px solid #ccc; padding-left: 11px; height: 20px; }
.content { flex: 1; display: flex; min-height: 0; }
.gutter { width: 107px; flex: none; background: #fff; display: flow-root; }
.info { width: 47px; height: 47px; border: 2px solid #ebebeb; border-radius: 50%; margin: 18px 0 0 22.500px; display: flex; align-items: center; justify-content: center; }
.stage { width: 1639px; flex: none; background: #2b292c; position: relative; padding-left: 60px; box-sizing: border-box; }
.shared { width: 1519px; height: 864px; border: 1px solid #4d6a72; border-top-color: #3d5d66; box-sizing: border-box; background: #fff; display: flex; flex-direction: column; overflow: hidden; }
.apptitle { height: 36px; flex: none; display: flex; align-items: center; padding: 0 0 2px 9.500px; box-sizing: border-box; font-size: 14.500px; color: #9a9593; }
.apptitle > svg:first-child { margin: -4px 6px 0 0; }
.wc { margin-left: auto; margin-right: 20px; }
.appnav { height: 76px; flex: none; display: flex; align-items: center; border-bottom: 2px solid #a0a0a0; position: relative; box-sizing: border-box; padding-bottom: 1px; font-family: Roboto, sans-serif; color: #757575; box-shadow: 0 1px 3px #ccc; }
.burger { margin-left: 28.500px; }
.house { margin-left: 47.500px; }
.start { font-size: 24px; margin-left: 5px; }
.ktab { margin-left: 14px; width: 235px; height: 76px; box-sizing: border-box; border-bottom: 3px solid #c23757; padding: 0 0 3px 14px; display: flex; align-items: center; gap: 11px; color: #d0566b; font-size: 19px; flex: none; align-self: flex-start; }
.about { font-size: 17.500px; margin: -3px 0 0 674px; color: #8a8a8a; }
.arc { margin: 25px 0 0 21px; }
.brand { margin-left: 27px; width: 169px; height: 48px; background: #d90b27; display: flex; align-items: center; padding-left: 16px; box-sizing: border-box; flex: none; font: bold 30px/1 "Liberation Sans", sans-serif; color: #eceff3; }
.tools { height: 47px; flex: none; display: flex; align-items: center; border-bottom: 1px solid #bbb; box-sizing: border-box; color: #444; font-size: 14.500px; padding-bottom: 1px; }
.t1 { margin-left: 20.500px; }
.t2 { margin-left: 64.500px; margin-top: -2px; }
.t3 { margin-left: 22px; }
.t4 { margin-left: 17px; }
.field { border: 1px solid #999; border-radius: 2px; height: 26px; box-sizing: border-box; display: flex; align-items: center; flex: none; margin-top: -4px; }
.num { width: 65px; margin-left: 12px; padding-left: 40px; }
.of { margin-left: 4px; margin-top: -4px; }
.t5 { margin-left: 231px; }
.t6 { margin-left: 32.500px; }
.t7 { margin-left: 34.500px; }
.t8 { margin-left: 32.500px; margin-top: 2px; }
.t9 { margin-left: 33px; }
.t10 { margin-left: 33px; }
.t11 { margin-left: 35px; margin-top: 1px; }
.t12 { margin-left: 246.500px; margin-top: -2px; }
.t13 { margin-left: 19px; margin-top: -3px; }
.t14 { margin-left: 15px; margin-top: -3px; }
.zoom { width: 176px; margin-left: 12px; padding-left: 8px; }
.t15 { margin-left: 15px; margin-top: -2px; }
.viewer { flex: 1; min-height: 0; display: flex; position: relative; background: #dedede; overflow: hidden; justify-content: flex-end; }
.page { width: 1238px; height: 704px; background: #fefefe; display: flex; box-shadow: 0 0 8px 2px #888; margin-right: 149px; flex: none; overflow: visible; font-family: "Open Sans", sans-serif; clip-path: inset(0 -12px 0 -12px); }
.main { width: 937px; padding: 22px 0 0 117px; box-sizing: border-box; flex: none; }
.row { height: 27px; line-height: 27px; display: grid; grid-template-columns: 42px auto; justify-items: start; }
.h3 { font-size: 18.500px; font-weight: 700; color: #303032; }
.mk { color: #dd4a58; display: block; transform-origin: 0 50%; flex: none; }
.lines { list-style: none; margin: 11px 0 0 42px; padding: 0; font: 20.500px/27px "Liberation Serif", serif; color: #38383a; }
.lines li { height: 27px; display: flex; position: relative; }
.no { width: 24px; }
.done::after { content: ""; position: absolute; left: 0; top: 12px; width: 393px; height: 2px; background: #23566c; }
table { margin: 16px 0 0 42px; border-collapse: collapse; table-layout: fixed; width: 738px; height: 71px; font: 20px/28px "Liberation Serif", serif; color: #38383a; }
th, td { border: 1px solid #d3e3e8; padding: 0; width: 81.500px; text-align: left; vertical-align: middle; height: 34px; box-sizing: border-box; font-weight: normal; }
th { background: #c1e2da; padding-left: 9px; border-color: #c1e2da; border-bottom-color: #dff0ed; }
td:last-child { width: 160px; }
.r1 td { padding-left: 8px; }
.r1 td.n1 { padding-left: 25px; }
.r1 td.n4 { padding-left: 10px; }
.r1 td.n5 { padding-left: 10px; }
.r1 td.n7 { padding-left: 17px; }
.r1 td.n6 { padding-left: 10px; }
.r2 td, .r2 th { height: 36px; }
em { font: 26px/28px "Liberation Sans", sans-serif; color: #222; position: relative; display: block; height: 28px; }
em.n3 { left: 19px; top: -2px; }
em.n1 { left: 36px; font: 20px/28px "Open Sans", sans-serif; color: #2f5478; top: 1px; }
em.n2 { left: 31px; top: -7px; }
em.n4 { left: 16px; top: -6px; }
em.n5 { left: 26px; top: 1px; }
em.n7 { left: 34px; top: 2px; }
em.n6 { left: 25px; top: -1px; }
.rc { margin-top: 37px; }
.chips { margin: 11px 0 0 42px; display: flex; flex-direction: column; gap: 2.500px; font-size: 17.500px; font-weight: 500; color: #2f3a3b; }
.chiprow { display: flex; gap: 3px; }
.chip { height: 25px; line-height: 25px; background: #dcedea; box-sizing: border-box; flex: none; position: relative; }
.chip.x::after { content: ""; position: absolute; left: 6px; top: 12px; width: 155px; height: 2px; background: #23566c; }
.hand { margin-top: 17.500px; font: 18.500px/27px Lato, sans-serif; color: #27577d; }
.hand span { grid-column: 2; }
.c4 { margin-top: 41px; height: 30px; line-height: 30px; font-size: 23px; font-weight: 700; color: #dd4a60; }
.c4 .mk { color: #dd4a60; }
.ra { margin-top: 19px; }
.cards { display: flex; margin: 21px 0 0 43px; gap: 50px; font: 19px/25px Lato, sans-serif; color: #27577d; }
.lift { filter: drop-shadow(2px 0 2px #999); flex: none; }
.card { background: #f4f0ea; }
.card p { margin: 0; height: 25px; display: flex; align-items: center; }
.left { width: 460px; height: 120px; clip-path: polygon(0 0, 100% 8px, 100% 100%, 0 100%); padding: 9px 0 0 15px; box-sizing: border-box; }
.right { width: 286px; height: 120px; clip-path: polygon(0 2px, 100% 0, 100% 100%, 0 100%); padding: 8px 0 0 16px; box-sizing: border-box; }
.ul { width: 124px; height: 1px; background: #6d94ae; margin: 20px 2px 0 8px; transform: rotate(.6deg); flex: none; }
.ul.two { width: 103px; margin: 17px 26px 0 7px; }
.low { padding-top: 5px; }
.side { width: 183px; padding-top: 20px; flex: none; }
.box { background: linear-gradient(120deg, #e8f4f2, #e4f4f0); position: relative; padding: 7.500px 0 0 18px; box-sizing: border-box; }
.box::before { content: ""; position: absolute; left: 0; top: 0; width: 46px; height: 44px; border: dashed #86a3a5; border-width: 2px 0 0 2px; }
.box::after { content: ""; position: absolute; right: 0; bottom: 0; width: 46px; height: 42px; border: dashed #86a3a5; border-width: 0 2px 2px 0; }
.b1 { height: 67px; }
.b2 { height: 141px; margin-top: 17px; }
.b3 { height: 92px; margin-top: 19px; padding-top: 7px; }
.b4 { height: 67px; margin-top: 14px; padding-top: 7px; }
.b5 { height: 66px; margin-top: 15px; padding-top: 7px; }
.box h4 { margin: 0; font: 700 17px/25px "Open Sans", sans-serif; color: #7f9db0; }
.box p { margin: 0; font: 20px/25px "Liberation Serif", serif; height: 25px; display: flex; align-items: center; color: #303638; position: relative; top: .5px; }
.tl { color: #3aacb2; }
.stem { width: 56px; }
.box .stem .tl { display: inline-block; }
.dot { width: 8px; height: 8px; border-radius: 4px; margin: 0 3px 0 4px; flex: none; }
.nd { margin: 0 3.500px 0 0; }
.blue { background: #1557a5; }
.scroll { position: absolute; right: 0; top: 0; width: 21px; height: 100%; background: #f1f1f2; display: flex; flex-direction: column; align-items: center; padding: 7px 0 8px; box-sizing: border-box; }
.scroll i { width: 16px; height: 21px; background: #c3c3c4; margin: auto 0 50px; }
.shade { position: absolute; left: 590px; top: 0; width: 350px; height: 20px; background: radial-gradient(ellipse at 50% 0, rgba(0, 0, 0, .16), transparent 70%); }
.cmt { position: absolute; left: 880px; top: 56px; }
.memo { position: absolute; left: 875px; top: 119px; width: 181px; height: 54px; border: 1px solid #999; border-right: 0; box-sizing: border-box; background: #fff; display: flex; justify-content: space-between; overflow: hidden; font: 24px/28px "Liberation Mono", monospace; color: #555; }
.memo div { display: flex; flex-direction: column; align-items: flex-start; padding: 1px 0 0 1px; }
.note { position: absolute; font: 26px/30px "Liberation Sans", sans-serif; color: #222; }
.ibeam { position: absolute; left: 1301px; top: -4px; }
.pill { position: absolute; left: 595.500px; top: 11px; width: 422px; height: 54px; border: 2px solid #ebebeb; border-radius: 27px; background: #fff; box-sizing: border-box; display: flex; align-items: center; padding-left: 13.500px; font: 20px/24px "Liberation Sans", sans-serif; color: #000; }
.speaks { position: absolute; left: 1311px; top: 57px; width: 360px; height: 41px; background: rgba(0, 0, 0, .2); border-radius: 3px; display: flex; align-items: center; color: #fff; font: 17.500px/24px "Liberation Sans", sans-serif; padding-left: 14px; box-sizing: border-box; gap: 29px; }
.mic { position: absolute; left: 784px; top: 823px; width: 77px; height: 77px; border: 2px solid #f4462f; border-radius: 50%; box-sizing: border-box; background: rgba(255, 70, 50, .13); display: flex; align-items: center; justify-content: center; }
.ctrl { margin: 311px 0 0 41px; width: 50px; height: 195px; border: 2px solid #ebebeb; border-radius: 25px; box-sizing: border-box; display: flex; flex-direction: column; align-items: center; gap: 30px; padding-top: 14px; }
</style>
